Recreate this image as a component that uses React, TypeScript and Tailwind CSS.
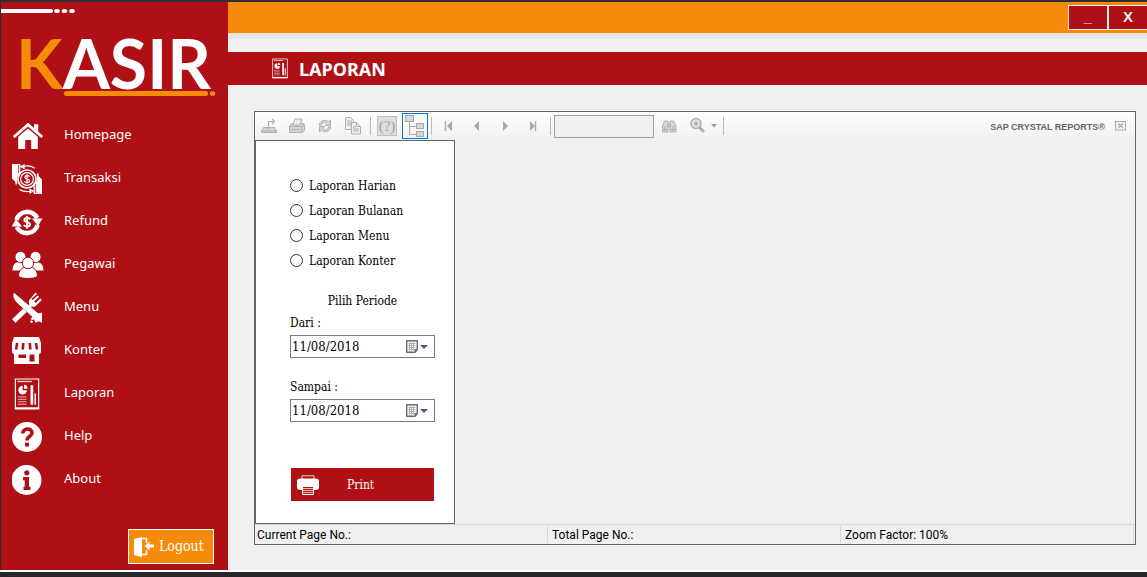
import React from "react";

type IconProps = { className?: string };

function HomeIcon() {
  return (
    <svg viewBox="0 0 32 32" className="size-8" fill="#fff">
      <path d="M1.8 17 16 4.6 30.2 17" fill="none" stroke="#fff" strokeWidth="2.8" />
      <path d="M22 4.2h4.2v8L22 8.6z" />
      <path d="M6.2 16.8 16 8.4l9.8 8.4V29h-6.6v-9h-6v9h-7z" />
    </svg>
  );
}

function TransactionIcon() {
  return (
    <svg viewBox="0 0 32 32" className="size-8" fill="none" stroke="#fff">
      <path d="M0 1h8.4v10.5L5.2 14v7.5H3.4V19L0 15.5z" fill="#fff" stroke="none" />
      <path d="M6.6 2v8" stroke="#af1015" strokeWidth="0.8" />
      <path d="M30 31h-8.4V20.5l3.2-2.5v-7.5h1.8V13l3.4 3.5z" fill="#fff" stroke="none" />
      <path d="M23.6 21v9" stroke="#af1015" strokeWidth="0.8" />
      <circle cx="15" cy="16" r="9" strokeWidth="1.6" />
      <circle cx="15" cy="16" r="6.4" strokeWidth="1.2" />
      <path d="M17.6 13.6c-.7-1.3-4.7-1.5-4.7.6 0 2.3 4.6 1.3 4.6 3.7 0 2.1-4.3 2-5.1.4M15 11.2v9.6" strokeWidth="1.2" />
      <path d="M11 3.8c4-1.4 8.500-.8 11.600 1.400M9 3.600l3-1.600v3.400z" strokeWidth="1.200" />
      <path d="M19 28c-4 1.200-8 .6-11.500-1.600M21 28l-3-1.600V30z" strokeWidth="1.200" />
    </svg>
  );
}

function RefundIcon() {
  return (
    <svg viewBox="0 0 32 32" className="size-8" fill="none" stroke="#fff">
      <path d="M4.500 14A11 10.500 0 0 1 25.200 12" strokeWidth="4.600" />
      <path d="M25.500 19A11 10.500 0 0 1 4.800 21" strokeWidth="4.600" />
      <path d="M20 12.500h10.500L26 20z" fill="#fff" stroke="none" />
      <path d="M10 20.500H-.5L4 13z" fill="#fff" stroke="none" />
      <path d="M18.200 13.300c-.8-1.700-5.800-2-5.800.6 0 2.900 5.500 1.500 5.500 4.600 0 2.600-5.200 2.500-6 .5M15 10v12.500" strokeWidth="2" />
    </svg>
  );
}

function StaffIcon() {
  return (
    <svg viewBox="0 0 32 32" className="size-8" fill="#fff" stroke="#af1015" strokeWidth="1">
      <path d="M0 22c0-6 2-9.600 8.500-9.600S16 16 16 22z" />
      <path d="M16 22c0-6 2-9.600 7.500-9.600S32 16 32 22z" />
      <circle cx="8.500" cy="8" r="5.600" />
      <circle cx="23.500" cy="8" r="5.600" />
      <path d="M6.500 27.500c.2-6 3-9.600 9.500-9.600s9.300 3.600 9.500 9.600c-4 2.600-15 2.600-19 0z" />
      <circle cx="16" cy="14" r="5.700" />
    </svg>
  );
}

function MenuIcon() {
  return (
    <svg viewBox="0 0 32 32" className="size-8" fill="none" stroke="#fff">
      <path d="M1.800 29 13 18.200" strokeWidth="5" />
      <path d="M16.500 15.500 21 11" strokeWidth="3" />
      <path d="M17 8.500c-1 4.500 3 8 6.600 5.400l6.200-6-1.400-1.500-4.800 4.500-1.400-1.300 4.900-4.800-1.400-1.400-5 4.700-1.300-1.400L25 2l-1.500-1.500z" fill="#fff" stroke="none" />
      <path d="M2 .8c-2 4 1 8.500 5.500 12.200L20.500 25l-2 2 2 1.200 1.500-1 1.500 3.500 3-1.500 3.500 1.500v-10l-4 .5z" fill="#fff" stroke="none" />
      <path d="m18.500 29 2 1.500" strokeWidth="2" />
    </svg>
  );
}

function CounterIcon() {
  return (
    <svg viewBox="0 0 32 32" className="size-8" fill="#fff">
      <path fillRule="evenodd" d="M2 2h25l2 6v8c0 2-1 3-2 3v10H2V19c-1 0-2-1-2-3V8zM6.500 19.500v3.500h7.500v-3.500zm11 0v7h5v-7z" />
      <g stroke="#af1015" strokeWidth="2.600" fill="none">
        <path d="M5.200 8 4 14.500M11.300 8l-.5 6.500M17.800 8l.5 6.500M23.900 8l1.200 6.500" />
      </g>
    </svg>
  );
}

function ReportIcon({ className }: IconProps) {
  return (
    <svg viewBox="0 0 26 33" className={className} fill="none" stroke="#fff">
      <path d="M1 1h24v30H1z" strokeWidth="1.200" />
      <path d="M.4 31.500h25.200" strokeWidth="2" />
      <path d="M3 3.600h15" strokeWidth="1.400" opacity=".8" />
      <path d="M8.500 8A4.500 4.500 0 1 0 13 12.700H8.500z" fill="#fff" stroke="none" />
      <path d="M10 7v4h3.600A4 4 0 0 0 10 7z" fill="#fff" stroke="none" />
      <path d="M18 7.500v20" strokeWidth="2.800" />
      <path d="M21.500 16v11.500" strokeWidth="1.600" />
      <path d="M3.500 19.500h9M3.500 22h9M3.500 24.500h9M3.500 27h9" strokeWidth="1" opacity=".7" />
    </svg>
  );
}

function HelpIcon() {
  return (
    <svg viewBox="0 0 32 32" className="size-8" fill="none">
      <circle cx="15" cy="16" r="15" fill="#fff" />
      <path d="M10.800 12.500c.1-6.300 9.200-5.700 9.200-.6 0 3.200-5 3.300-5 7.600" stroke="#af1015" strokeWidth="3.600" />
      <path d="M13 21.700h4v3.800h-4z" fill="#af1015" />
    </svg>
  );
}

function AboutIcon() {
  return (
    <svg viewBox="0 0 32 32" className="size-8">
      <circle cx="14.500" cy="16" r="15" fill="#fff" />
      <circle cx="14.800" cy="8.800" r="2.600" fill="#af1015" />
      <path d="M11 13h6v9.800h1.500v3.200h-7v-3.200h1.200v-6.600H11z" fill="#af1015" />
    </svg>
  );
}

function LogoutIcon() {
  return (
    <svg viewBox="0 0 20 20" className="size-5 shrink-0" fill="#fff">
      <path d="m0 2 8-2v20l-8-2z" />
      <path d="M8 1.500h4.500V6M8 17.500h4.500V13" fill="none" stroke="#fff" strokeWidth="1.500" />
      <path d="m10.500 9 5-4.500v3H20v3h-4.500v3z" />
    </svg>
  );
}

function PrintIcon() {
  return (
    <svg viewBox="0 0 22 20" className="h-5 w-[22px]" fill="none" stroke="#fff">
      <path d="M5 5V.8h12V5" strokeWidth="1" opacity=".8" />
      <rect x="0" y="3.500" width="22" height="11.500" rx="3" fill="#fff" stroke="none" />
      <path d="M5.500 11.500h11v8h-11z" fill="#af1015" strokeWidth="1" />
      <path d="M6 13.500h10M6 15.500h10M6 17.500h10" strokeWidth="1" opacity=".7" />
    </svg>
  );
}

const nav = [
  { label: "Homepage", icon: <HomeIcon /> },
  { label: "Transaksi", icon: <TransactionIcon /> },
  { label: "Refund", icon: <RefundIcon /> },
  { label: "Pegawai", icon: <StaffIcon /> },
  { label: "Menu", icon: <MenuIcon /> },
  { label: "Konter", icon: <CounterIcon /> },
  { label: "Laporan", icon: <ReportIcon className="ml-[2px] h-8 w-[26px]" /> },
  { label: "Help", icon: <HelpIcon /> },
  { label: "About", icon: <AboutIcon /> },
];

function Sidebar() {
  return (
    <aside className="flex w-[228px] shrink-0 flex-col border-l border-[#2b2b30] bg-[#af1015] text-white">
      <svg viewBox="0 0 76 8" className="mt-[5px] h-2 w-[76px]" fill="#fff">
        <path d="M0 2h50a2 2 0 0 1 0 4H0z" />
        <ellipse cx="56" cy="4" rx="2.800" ry="2" />
        <ellipse cx="63.500" cy="4" rx="2.800" ry="2" />
        <ellipse cx="71" cy="4" rx="2.800" ry="2" />
      </svg>
      <div className="mt-4 pl-[15px] font-[Lato] text-[68px] leading-[64px] font-bold">
        <span className="text-[#f68b09]">K</span>ASIR
      </div>
      <svg viewBox="0 0 152 6" className="-mt-1 ml-[63px] h-[6px] w-[152px]" fill="#f68b09">
        <rect x="0" y="0" width="144" height="5" rx="2.500" />
        <ellipse cx="148.500" cy="2.500" rx="2.700" ry="2.300" />
      </svg>
      <nav className="mt-[15px] pl-[11px]">
        {nav.map((item) => (
          <a key={item.label} href="#" className="flex h-[43px] items-center">
            <span className="flex w-[52px] shrink-0 pt-1">{item.icon}</span>
            <span className="font-['Noto_Sans',sans-serif] text-[13px] leading-5">{item.label}</span>
          </a>
        ))}
      </nav>
      <button
        type="button"
        className="mt-auto mr-[14px] mb-[6px] flex h-[35px] w-[86px] items-center gap-[5px] self-end border border-white bg-[#f68b09] pl-[5px] font-['DejaVu_Serif_Condensed','DejaVu_Serif',serif] text-[14px]"
      >
        <LogoutIcon />
        Logout
      </button>
    </aside>
  );
}

function Separator() {
  return <span className="mx-[3px] h-[18px] w-px shrink-0 bg-[#b9b9b9]" />;
}

function ToolButton({ label, children }: { label: string; children: React.ReactNode }) {
  return (
    <button type="button" aria-label={label} className="flex h-6 w-7 shrink-0 items-center justify-center">
      {children}
    </button>
  );
}

function Glyph({ children }: { children: React.ReactNode }) {
  return (
    <svg viewBox="0 0 18 18" className="size-[18px]" fill="#d6d6d6" stroke="#b0b0b0" strokeWidth="1">
      {children}
    </svg>
  );
}

function Toolbar() {
  return (
    <div className="flex h-7 shrink-0 items-center bg-linear-to-b from-white to-[#f0f0f0]">
      <ToolButton label="Export">
        <Glyph>
          <path d="M3.500 10.500h11l2 3.500v1.500h-15V14z" />
          <path d="M1.500 14h15" />
          <path d="M8.500 12V4.500H14M12 2l2.500 2.500L12 7" fill="none" strokeWidth="1.200" />
        </Glyph>
      </ToolButton>
      <ToolButton label="Print report">
        <Glyph>
          <path d="M1.500 8.500 4 6.500h11.500l1 2V13l-2 2.500h-13z" />
          <path d="M4.500 8 7 2h7l-2 6z" fill="#eee" />
          <path d="M1.500 9.500h12.500v5.500M14 9.500l2.500-2M3 12.500h9" fill="none" />
        </Glyph>
      </ToolButton>
      <ToolButton label="Refresh">
        <Glyph>
          <path d="M3 8c1-5 7-6 9.500-3L14.500 3v5.500H9.500l1.500-2C9 4.500 6 5 5.500 8z" />
          <path d="M15 10c-1 5-7 6-9.500 3L3.500 15V9.500h5L7 11.500c2 2 5 1.500 5.500-1.500z" />
        </Glyph>
      </ToolButton>
      <ToolButton label="Copy">
        <Glyph>
          <path d="M1.500 .5h5l3 3v9h-8z" fill="#eee" />
          <path d="M3 4h5M3 6h5M3 8h5" />
          <path d="M7.500 5.500h5l4 4v7.500h-9z" fill="#eee" />
          <path d="M12.500 5.500v4h4M9 10h3M9 12h6M9 14h6" fill="none" />
        </Glyph>
      </ToolButton>
      <Separator />
      <button
        type="button"
        aria-label="Parameters"
        className="ml-[3px] flex size-5 shrink-0 items-center justify-center border border-[#c0c0c0] bg-[#dedede] font-['Liberation_Serif',serif] text-[15px] leading-none text-[#a0a0a0]"
      >
        (?)
      </button>
      <button
        type="button"
        aria-label="Group tree"
        className="ml-[5px] flex size-[26px] shrink-0 items-center justify-center border border-[#0078d7]"
      >
        <svg viewBox="0 0 22 24" className="h-6 w-[22px]" fill="#d6d6d6" stroke="#a9a9a9">
          <path d="M5.500 8v12.500h7M5.500 12.500h7" fill="none" />
          <rect x="1.500" y="1.500" width="8" height="6" />
          <rect x="12.500" y="9.500" width="7" height="5" />
          <rect x="12.500" y="17.500" width="7" height="5" />
        </svg>
      </button>
      <Separator />
      <ToolButton label="First page">
        <Glyph><path d="M5.500 4v10" strokeWidth="1.500" /><path d="M12 4v10L7 9z" fill="#a9a9a9" stroke="none" /></Glyph>
      </ToolButton>
      <ToolButton label="Previous page">
        <Glyph><path d="M11 4v10L6 9z" fill="#a9a9a9" stroke="none" /></Glyph>
      </ToolButton>
      <ToolButton label="Next page">
        <Glyph><path d="M7 4v10l5-5z" fill="#a9a9a9" stroke="none" /></Glyph>
      </ToolButton>
      <ToolButton label="Last page">
        <Glyph><path d="M6 4v10l5-5z" fill="#a9a9a9" stroke="none" /><path d="M11.500 4v10" strokeWidth="1.500" /></Glyph>
      </ToolButton>
      <Separator />
      <input
        aria-label="Page number"
        className="h-[23px] w-[100px] shrink-0 border border-[#a2a2a2] bg-[#f0f0f0] px-1 text-xs"
      />
      <span className="w-px shrink-0" />
      <ToolButton label="Find">
        <Glyph>
          <path d="M4.500 4h3.500v11H2.500V9zM10 4h3.500l2.500 5v6h-6z" />
          <path d="M8 7h2v3H8zM5 9v5M13 9v5M2.500 12.500H8M10 12.500h6" />
        </Glyph>
      </ToolButton>
      <button type="button" aria-label="Zoom" className="flex h-6 w-[37px] shrink-0 items-center gap-1 pl-[6px]">
        <Glyph>
          <path d="m10 10 5 5" strokeWidth="3" />
          <circle cx="7" cy="6.500" r="5" fill="#e4e4e4" strokeWidth="1.500" />
          <path d="M4.500 6.500h5M7 4v5" strokeWidth="1.500" />
        </Glyph>
        <svg viewBox="0 0 6 4" className="h-1 w-[6px]" fill="#999">
          <path d="M0 0h6L3 3.500z" />
        </svg>
      </button>
      <Separator />
      <span className="ml-auto shrink-0 pt-[2px] font-['Liberation_Sans',sans-serif] text-[9px] leading-none font-bold text-[#656565]">
        SAP CRYSTAL REPORTS<span className="align-top">®</span>
      </span>
      <button type="button" aria-label="Close report" className="mr-[8px] ml-[10px] shrink-0">
        <svg viewBox="0 0 12 10" className="h-[10px] w-3" fill="#f3f3f3" stroke="#adadad">
          <rect x=".5" y=".5" width="10" height="8.500" />
          <path d="m3 2.500 5 4.500M8 2.500 3 7" strokeWidth="1.300" />
        </svg>
      </button>
    </div>
  );
}

function DateField({ id, label }: { id: string; label: string }) {
  return (
    <div className="flex flex-col gap-[2px]">
      <label htmlFor={id} className="leading-5">{label}</label>
      <div className="flex h-[23px] items-center border border-[#7a7a7a]">
        <input id={id} defaultValue="11/08/2018" className="w-0 flex-1 pl-px text-[13px] outline-none" />
        <button type="button" aria-label="Open calendar" className="mr-[6px] flex items-center gap-[2px]">
          <svg viewBox="0 0 12 13" className="h-[13px] w-3" fill="none">
            <path d="M2 2.500h8M2 4.500h8M2 6.500h8M2 8.500h8" stroke="#c3cadd" />
            <path d="M.7.700h10.600v9L9 12.300H.7z" fill="#f7f7fa" stroke="#766b6b" strokeWidth="1.400" />
            <path d="M2.500 3.500h7M2.500 5.500h7M2.500 7.500h7M2.500 9.500h5.500M3.500 2.500v8M5.500 2.500v8M7.500 2.500v8" stroke="#9aa3ba" strokeWidth=".8" />
            <path d="M11.500 9H8.500v3.300z" fill="#766b6b" />
          </svg>
          <svg viewBox="0 0 8 4" className="h-1 w-2" fill="#465b8b">
            <path d="M0 0h8L4 4z" />
          </svg>
        </button>
      </div>
    </div>
  );
}

const reports = ["Laporan Harian", "Laporan Bulanan", "Laporan Menu", "Laporan Konter"];

function ReportForm() {
  return (
    <form className="flex w-[200px] shrink-0 flex-col border border-[#646464] bg-white pt-8 pr-[19px] pb-[21px] pl-[34px] font-['DejaVu_Serif_Condensed','DejaVu_Serif',serif] text-[12px] text-black">
      {reports.map((name) => (
        <label key={name} className="flex h-[25px] items-center gap-[6px]">
          <input
            type="radio"
            name="report"
            className="size-[13px] shrink-0 appearance-none rounded-full border border-[#333] bg-white checked:border-4"
          />
          <span className="whitespace-nowrap">{name}</span>
        </label>
      ))}
      <p className="mt-[17px] text-center leading-[23px]">Pilih Periode</p>
      <div className="flex flex-col gap-[19px]">
        <DateField id="from" label="Dari :" />
        <DateField id="until" label="Sampai :" />
      </div>
      <button type="button" className="mx-px mt-[46px] flex h-[33px] items-center bg-[#af1015] pl-[6px] text-white">
        <PrintIcon />
        <span className="ml-7">Print</span>
      </button>
    </form>
  );
}

function StatusBar() {
  return (
    <footer className="flex h-5 shrink-0 border-t border-[#d7d7d7] py-px font-[Roboto,sans-serif] text-[12px] leading-[18px] text-black">
      <span className="w-[293px] shrink-0 border-r border-[#d7d7d7] pl-[2px]">Current Page No.:</span>
      <span className="w-[293px] shrink-0 border-r border-[#d7d7d7] pl-1">Total Page No.:</span>
      <span className="mr-px flex-1 border-r border-[#d7d7d7] pl-1">Zoom Factor: 100%</span>
    </footer>
  );
}

export default function App() {
  return (
    <div className="flex min-h-screen flex-col bg-[#f0f0f0]">
      <div className="h-[2px] bg-[#302e30]" />
      <div className="flex flex-1">
        <Sidebar />
        <div className="flex min-w-0 flex-1 flex-col">
          <header className="flex h-[31px] justify-end bg-[#f68b09] pt-[3px] font-['Liberation_Sans',sans-serif] text-[15px] font-bold text-[#eee]">
            <button type="button" aria-label="Minimize" className="h-[25px] w-10 border border-[#eee] bg-[#af1015]">_</button>
            <button type="button" aria-label="Close" className="h-[25px] w-[39px] border-y border-l border-[#eee] bg-[#af1015]">X</button>
          </header>
          <div className="h-[6px] bg-[#e5e5e5]" />
          <div className="mt-[13px] flex h-[33px] items-center gap-[11px] bg-[#af1015] pl-11 text-white">
            <ReportIcon className="h-[23px] w-4" />
            <h1 className="pt-px font-['Noto_Sans',sans-serif] text-[18px] font-bold">LAPORAN</h1>
          </div>
          <main className="flex flex-1 pt-[26px] pr-[11px] pb-[25px] pl-[26px]">
            <section className="flex min-w-0 flex-1 flex-col border border-[#646464]">
              <Toolbar />
              <div className="flex flex-1">
                <ReportForm />
              </div>
              <StatusBar />
            </section>
          </main>
        </div>
      </div>
      <div className="h-[2px] bg-white" />
      <div className="h-[5px] bg-[#27262a]" />
    </div>
  );
}
